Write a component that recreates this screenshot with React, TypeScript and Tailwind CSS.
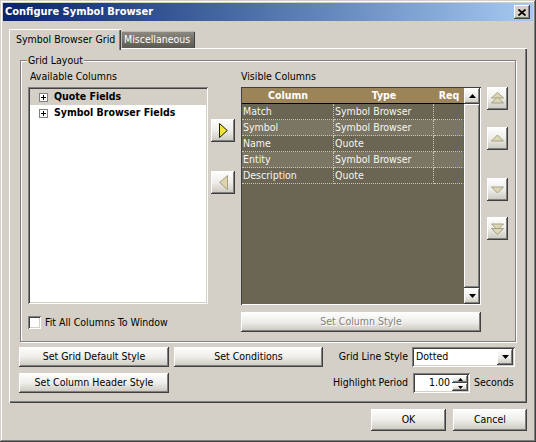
import React from 'react'

const raised = 'shadow-[inset_-1px_-1px_#404040,inset_1px_1px_#ffffff,inset_-2px_-2px_#808080]'
const sunken = 'shadow-[inset_1px_1px_#808080,inset_-1px_-1px_#ffffff,inset_2px_2px_#404040,inset_-2px_-2px_#d4d0c8]'
const face = 'bg-linear-to-b from-[#ffffff] via-[#eeede9] to-[#c8c4ba]'

const rows = [
  ['Match', 'Symbol Browser'],
  ['Symbol', 'Symbol Browser'],
  ['Name', 'Quote'],
  ['Entity', 'Symbol Browser'],
  ['Description', 'Quote'],
]

function Btn({ className = '', disabled = false, children }: { className?: string; disabled?: boolean; children?: React.ReactNode }) {
  return (
    <div
      className={`flex items-center justify-center ${face} ${raised} ${disabled ? 'text-[#84817a] [text-shadow:1px_1px_#ffffff]' : 'text-black'} ${className}`}
    >
      {children}
    </div>
  )
}

function Plus() {
  return (
    <div className="w-[9px] h-[9px] border border-[#808080] bg-white flex items-center justify-center">
      <svg width="5" height="5" viewBox="0 0 5 5">
        <path d="M0 2.5h5M2.5 0v5" stroke="#000" strokeWidth="1" />
      </svg>
    </div>
  )
}

function Tri({ dir }: { dir: 'up' | 'down' }) {
  return (
    <svg width="7" height="4" viewBox="0 0 7 4">
      <path d={dir === 'up' ? 'M3.5 0L7 4H0z' : 'M0 0h7L3.5 4z'} fill="#000" />
    </svg>
  )
}

function MoveIcon({ kind }: { kind: 'top' | 'up' | 'down' | 'bottom' }) {
  const fill = '#dcd8b6'
  const stroke = '#a39f83'
  return (
    <svg width="13" height="13" viewBox="0 0 13 13">
      {kind === 'top' && (
        <>
          <path d="M6.5 0.5L12.5 6H0.5z" fill={fill} stroke={stroke} />
          <path d="M6.5 5L12.5 11H0.5z" fill={fill} stroke={stroke} />
        </>
      )}
      {kind === 'up' && <path d="M6.5 3L12.5 9H0.5z" fill={fill} stroke={stroke} />}
      {kind === 'down' && <path d="M0.5 4H12.5L6.5 10z" fill={fill} stroke={stroke} />}
      {kind === 'bottom' && (
        <>
          <path d="M0.5 2H12.5L6.5 8z" fill={fill} stroke={stroke} />
          <path d="M0.5 6.5H12.5L6.5 12.5z" fill={fill} stroke={stroke} />
        </>
      )}
    </svg>
  )
}

export default function App() {
  return (
    <div className="w-[536px] h-[442px] bg-[#d4d0c8] p-[3px] flex flex-col font-['DejaVu_Sans_Condensed','Liberation_Sans',sans-serif] text-[10.5px] text-black shadow-[inset_-1px_-1px_#404040,inset_1px_1px_#d4d0c8,inset_-2px_-2px_#808080,inset_2px_2px_#ffffff] select-none">
      {/* title bar */}
      <div className="h-[18px] shrink-0 flex items-center bg-linear-to-r from-[#0a246a] to-[#a6caf0] pl-[2px] pr-[3px]">
        <span className="font-bold text-white text-[11px]">Configure Symbol Browser</span>
        <div className={`ml-auto w-[16px] h-[14px] bg-[#d4d0c8] ${raised} flex items-center justify-center`}>
          <svg width="8" height="7" viewBox="0 0 8 7">
            <path d="M0.5 0.5L7.5 6.5M7.5 0.5L0.5 6.5" stroke="#000" strokeWidth="1.7" />
          </svg>
        </div>
      </div>

      <div className="px-[6px] pt-[8px] flex flex-col">
        {/* tabs */}
        <div className="h-[19px] flex items-end relative z-10">
          <div className="h-[21px] -mb-[2px] w-[112px] bg-[#d4d0c8] pl-[7px] pt-[3px] leading-[14px] whitespace-nowrap overflow-hidden shadow-[inset_1px_1px_#ffffff,inset_-1px_0_#404040,inset_-2px_0_#808080]">
            Symbol Browser Grid
          </div>
          <div className="h-[17px] w-[74px] pl-[3px] leading-[16px] text-white whitespace-nowrap overflow-hidden bg-linear-to-b from-[#8f8c84] to-[#5b5952] shadow-[inset_1px_1px_#bdbab2,inset_-1px_0_#404040]">
            Miscellaneous
          </div>
        </div>

        {/* panel */}
        <div className="h-[355px] w-[518px] bg-[#d4d0c8] shadow-[inset_1px_1px_#ffffff,inset_-1px_-1px_#404040,inset_-2px_-2px_#808080] pl-[10px] pt-[12px] flex flex-col">
          <div className="relative ml-[1px] w-[496px] h-[282px] border border-[#808080] shadow-[inset_1px_1px_#ffffff,1px_1px_#ffffff] flex items-start pt-[9px] pl-[7px]">
            <span className="absolute -top-[7px] left-[6px] px-[1px] bg-[#d4d0c8] leading-[13px]">Grid Layout</span>

            {/* available columns */}
            <div className="w-[180px] flex flex-col">
              <div className="h-[17px] leading-[13px] pl-[2px]">Available Columns</div>
              <div className={`h-[217px] bg-white p-[2px] ${sunken}`}>
                <div className="h-[16px] flex items-center bg-[#d4d0c8] pl-[9px] font-bold">
                  <Plus />
                  <span className="ml-[6px]">Quote Fields</span>
                </div>
                <div className="h-[16px] flex items-center pl-[9px] font-bold">
                  <Plus />
                  <span className="ml-[6px]">Symbol Browser Fields</span>
                </div>
              </div>
              <div className="mt-[12px] h-[13px] flex items-center">
                <div className={`w-[13px] h-[13px] bg-white ${sunken}`} />
                <span className="ml-[4px]">Fit All Columns To Window</span>
              </div>
            </div>

            {/* add / remove */}
            <div className="ml-[3px] w-[24px] pt-[49px] flex flex-col">
              <Btn className="h-[23px]">
                <svg width="9" height="15" viewBox="0 0 9 15">
                  <path d="M0.5 0.5L8.3 7.5L0.5 14.5z" fill="#f4e33c" stroke="#1c1c00" />
                </svg>
              </Btn>
              <Btn className="h-[23px] mt-[29px]">
                <svg width="9" height="15" viewBox="0 0 9 15">
                  <path d="M8.5 0.5L0.7 7.5L8.5 14.5z" fill="#dcd6aa" stroke="#a29d84" />
                </svg>
              </Btn>
            </div>

            {/* visible columns */}
            <div className="ml-[6px] w-[240px] flex flex-col">
              <div className="h-[17px] leading-[13px]">Visible Columns</div>
              <div className="h-[218px] bg-[#6b6553] p-[1px] flex shadow-[inset_1px_1px_#404040,inset_-1px_-1px_#ffffff]">
                <div className="flex-1 flex flex-col text-[#f6f6f2]">
                  <div className="flex h-[16px] bg-[#9b8558] border-b border-black font-bold text-white leading-[15px]">
                    <div className="w-[92px] text-center">Column</div>
                    <div className="w-[100px] text-center">Type</div>
                    <div className="w-[30px] text-center">Req</div>
                  </div>
                  {rows.map(([col, type], i) => (
                    <div key={col} className={`flex h-[16px] leading-[15px] ${i % 2 ? 'bg-[#7b7563]' : 'bg-[#6b6553]'}`}>
                      <div className="w-[92px] pl-[1px] border-r border-b border-dotted border-[#c8c3b2]">{col}</div>
                      <div className="w-[100px] pl-[1px] border-r border-b border-dotted border-[#c8c3b2]">{type}</div>
                      <div className="w-[30px] border-b border-r border-dotted border-b-[#c8c3b2] border-r-[#4a5aa0]" />
                    </div>
                  ))}
                </div>
                <div className="w-[16px] flex flex-col">
                  <Btn className="h-[16px]">
                    <Tri dir="up" />
                  </Btn>
                  <div className={`flex-1 bg-[#d4d0c8] ${raised}`} />
                  <Btn className="h-[16px]">
                    <Tri dir="down" />
                  </Btn>
                </div>
              </div>
              <Btn disabled className="mt-[7px] h-[20px]">
                Set Column Style
              </Btn>
            </div>

            {/* move buttons */}
            <div className="ml-[6px] w-[21px] pt-[17px] flex flex-col">
              <Btn className="h-[23px]">
                <MoveIcon kind="top" />
              </Btn>
              <Btn className="h-[23px] mt-[17px]">
                <MoveIcon kind="up" />
              </Btn>
              <Btn className="h-[23px] mt-[28px]">
                <MoveIcon kind="down" />
              </Btn>
              <Btn className="h-[23px] mt-[16px]">
                <MoveIcon kind="bottom" />
              </Btn>
            </div>
          </div>

          {/* bottom controls */}
          <div className="mt-[5px] w-[496px] flex justify-between">
            <div className="flex flex-col gap-[6px]">
              <div className="flex gap-[5px]">
                <Btn className="w-[150px] h-[20px]">Set Grid Default Style</Btn>
                <Btn className="w-[149px] h-[20px]">Set Conditions</Btn>
              </div>
              <Btn className="w-[150px] h-[20px]">Set Column Header Style</Btn>
            </div>
            <div className="grid grid-cols-[auto_103px] gap-x-[4px] gap-y-[6px] items-center">
              <div className="text-right">Grid Line Style</div>
              <div className={`h-[20px] bg-white flex items-center pl-[4px] pr-[2px] ${sunken}`}>
                <span>Dotted</span>
                <Btn className="ml-auto w-[16px] h-[16px]">
                  <Tri dir="down" />
                </Btn>
              </div>
              <div className="text-right">Highlight Period</div>
              <div className="flex items-center">
                <div className={`ml-[1px] w-[57px] h-[20px] bg-white flex items-center pr-[2px] ${sunken}`}>
                  <span className="ml-auto mr-[2px]">1.00</span>
                  <div className="w-[16px] h-[16px] flex flex-col">
                    <Btn className="h-[8px]">
                      <svg width="5" height="3" viewBox="0 0 5 3">
                        <path d="M2.5 0L5 3H0z" fill="#000" />
                      </svg>
                    </Btn>
                    <Btn className="h-[8px]">
                      <svg width="5" height="3" viewBox="0 0 5 3">
                        <path d="M0 0h5L2.5 3z" fill="#000" />
                      </svg>
                    </Btn>
                  </div>
                </div>
                <span className="ml-[4px]">Seconds</span>
              </div>
            </div>
          </div>
        </div>

        {/* footer */}
        <div className="mt-[6px] flex justify-end gap-[7px]">
          <Btn className="w-[75px] h-[22px]">OK</Btn>
          <Btn className="w-[74px] h-[22px]">Cancel</Btn>
        </div>
      </div>
    </div>
  )
}
